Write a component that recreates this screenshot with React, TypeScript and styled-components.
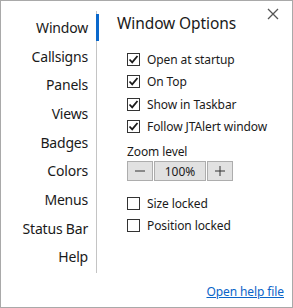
import styled, { createGlobalStyle } from 'styled-components';

const GlobalStyle = createGlobalStyle`
  html, body {
    margin: 0;
    padding: 0;
    background: #ffffff;
  }
  * {
    box-sizing: border-box;
  }
`;

const Frame = styled.div`
  width: 293px;
  height: 308px;
  border: 1px solid #a9a9a9;
  background: #ffffff;
  display: flex;
  font-family: 'Noto Sans', 'Open Sans', sans-serif;
  color: #1a1a1a;
  position: relative;
`;

const Sidebar = styled.nav`
  width: 96px;
  padding-top: 10px;
  display: flex;
  flex-direction: column;
`;

const NavList = styled.ul`
  list-style: none;
  margin: 0;
  padding: 2px 0 0 0;
  height: 262px;
  border-right: 1px solid #c4c4c4;
  display: flex;
  flex-direction: column;
`;

const NavItem = styled.li<{ $active?: boolean }>`
  position: relative;
  height: 28.7px;
  display: flex;
  align-items: center;
  justify-content: flex-end;
  padding-right: 8px;
  font-size: 14px;
  letter-spacing: -0.2px;
  &::after {
    content: '';
    display: ${(p) => (p.$active ? 'block' : 'none')};
    position: absolute;
    right: -3px;
    top: 1px;
    width: 3px;
    height: 27px;
    background: #0a68cc;
  }
`;

const Content = styled.main`
  flex: 1;
  padding: 10px 0 0 20px;
  display: flex;
  flex-direction: column;
`;

const Title = styled.h1`
  margin: 0 0 13px 0;
  font-size: 15.5px;
  font-weight: 400;
  letter-spacing: -0.1px;
  line-height: 24px;
`;

const CloseButton = styled.button`
  position: absolute;
  top: 6px;
  right: 12px;
  width: 14px;
  height: 14px;
  padding: 0;
  border: none;
  background: none;
  color: #555;
  display: flex;
`;

const Options = styled.div`
  padding-left: 10px;
  display: flex;
  flex-direction: column;
`;

const CheckRow = styled.label`
  display: flex;
  align-items: center;
  gap: 7px;
  height: 22.5px;
  font-size: 12px;
  letter-spacing: -0.1px;
`;

const Box = styled.span`
  width: 13px;
  height: 13px;
  border: 1px solid #333;
  background: #fff;
  display: flex;
  align-items: center;
  justify-content: center;
`;

const ZoomLabel = styled.div`
  margin-top: 6px;
  font-size: 12px;
  letter-spacing: -0.1px;
  line-height: 16px;
`;

const ZoomGroup = styled.div`
  display: flex;
  gap: 1px;
  margin-top: 1px;
  margin-bottom: 11px;
`;

const ZoomButton = styled.div<{ $wide?: boolean }>`
  width: ${(p) => (p.$wide ? '52px' : '26px')};
  height: 20px;
  background: #e1e1e1;
  border: 1px solid #adadad;
  display: flex;
  align-items: center;
  justify-content: center;
  font-size: 12px;
  color: #1a1a1a;
`;

const Footer = styled.div`
  margin-top: auto;
  padding: 0 8px 7px 0;
  display: flex;
  justify-content: flex-end;
`;

const HelpLink = styled.a`
  font-size: 12px;
  color: #0a64c8;
  text-decoration: underline;
  letter-spacing: -0.1px;
`;

const navItems = ['Window', 'Callsigns', 'Panels', 'Views', 'Badges', 'Colors', 'Menus', 'Status Bar', 'Help'];

function Check({ label, checked }: { label: string; checked: boolean }) {
  return (
    <CheckRow>
      <Box>
        {checked && (
          <svg width="11" height="11" viewBox="0 0 11 11">
            <path d="M1.5 5.5 L4.2 8.3 L9.5 2" fill="none" stroke="#1a1a1a" strokeWidth="1.8" />
          </svg>
        )}
      </Box>
      {label}
    </CheckRow>
  );
}

export default function App() {
  return (
    <>
      <GlobalStyle />
      <Frame>
        <Sidebar>
          <NavList>
            {navItems.map((item, i) => (
              <NavItem key={item} $active={i === 0}>
                {item}
              </NavItem>
            ))}
          </NavList>
        </Sidebar>
        <Content>
          <Title>Window Options</Title>
          <Options>
            <Check label="Open at startup" checked />
            <Check label="On Top" checked />
            <Check label="Show in Taskbar" checked />
            <Check label="Follow JTAlert window" checked />
            <ZoomLabel>Zoom level</ZoomLabel>
            <ZoomGroup>
              <ZoomButton>
                <svg width="12" height="12" viewBox="0 0 12 12">
                  <path d="M1 6 H11" stroke="#333" strokeWidth="1" />
                </svg>
              </ZoomButton>
              <ZoomButton $wide>100%</ZoomButton>
              <ZoomButton>
                <svg width="12" height="12" viewBox="0 0 12 12">
                  <path d="M1 6 H11 M6 1 V11" stroke="#333" strokeWidth="1" />
                </svg>
              </ZoomButton>
            </ZoomGroup>
            <Check label="Size locked" checked={false} />
            <Check label="Position locked" checked={false} />
          </Options>
          <Footer>
            <HelpLink href="#">Open help file</HelpLink>
          </Footer>
        </Content>
        <CloseButton aria-label="Close">
          <svg width="14" height="14" viewBox="0 0 14 14">
            <path d="M2 2 L12 12 M12 2 L2 12" stroke="#555" strokeWidth="1.3" />
          </svg>
        </CloseButton>
      </Frame>
    </>
  );
}
